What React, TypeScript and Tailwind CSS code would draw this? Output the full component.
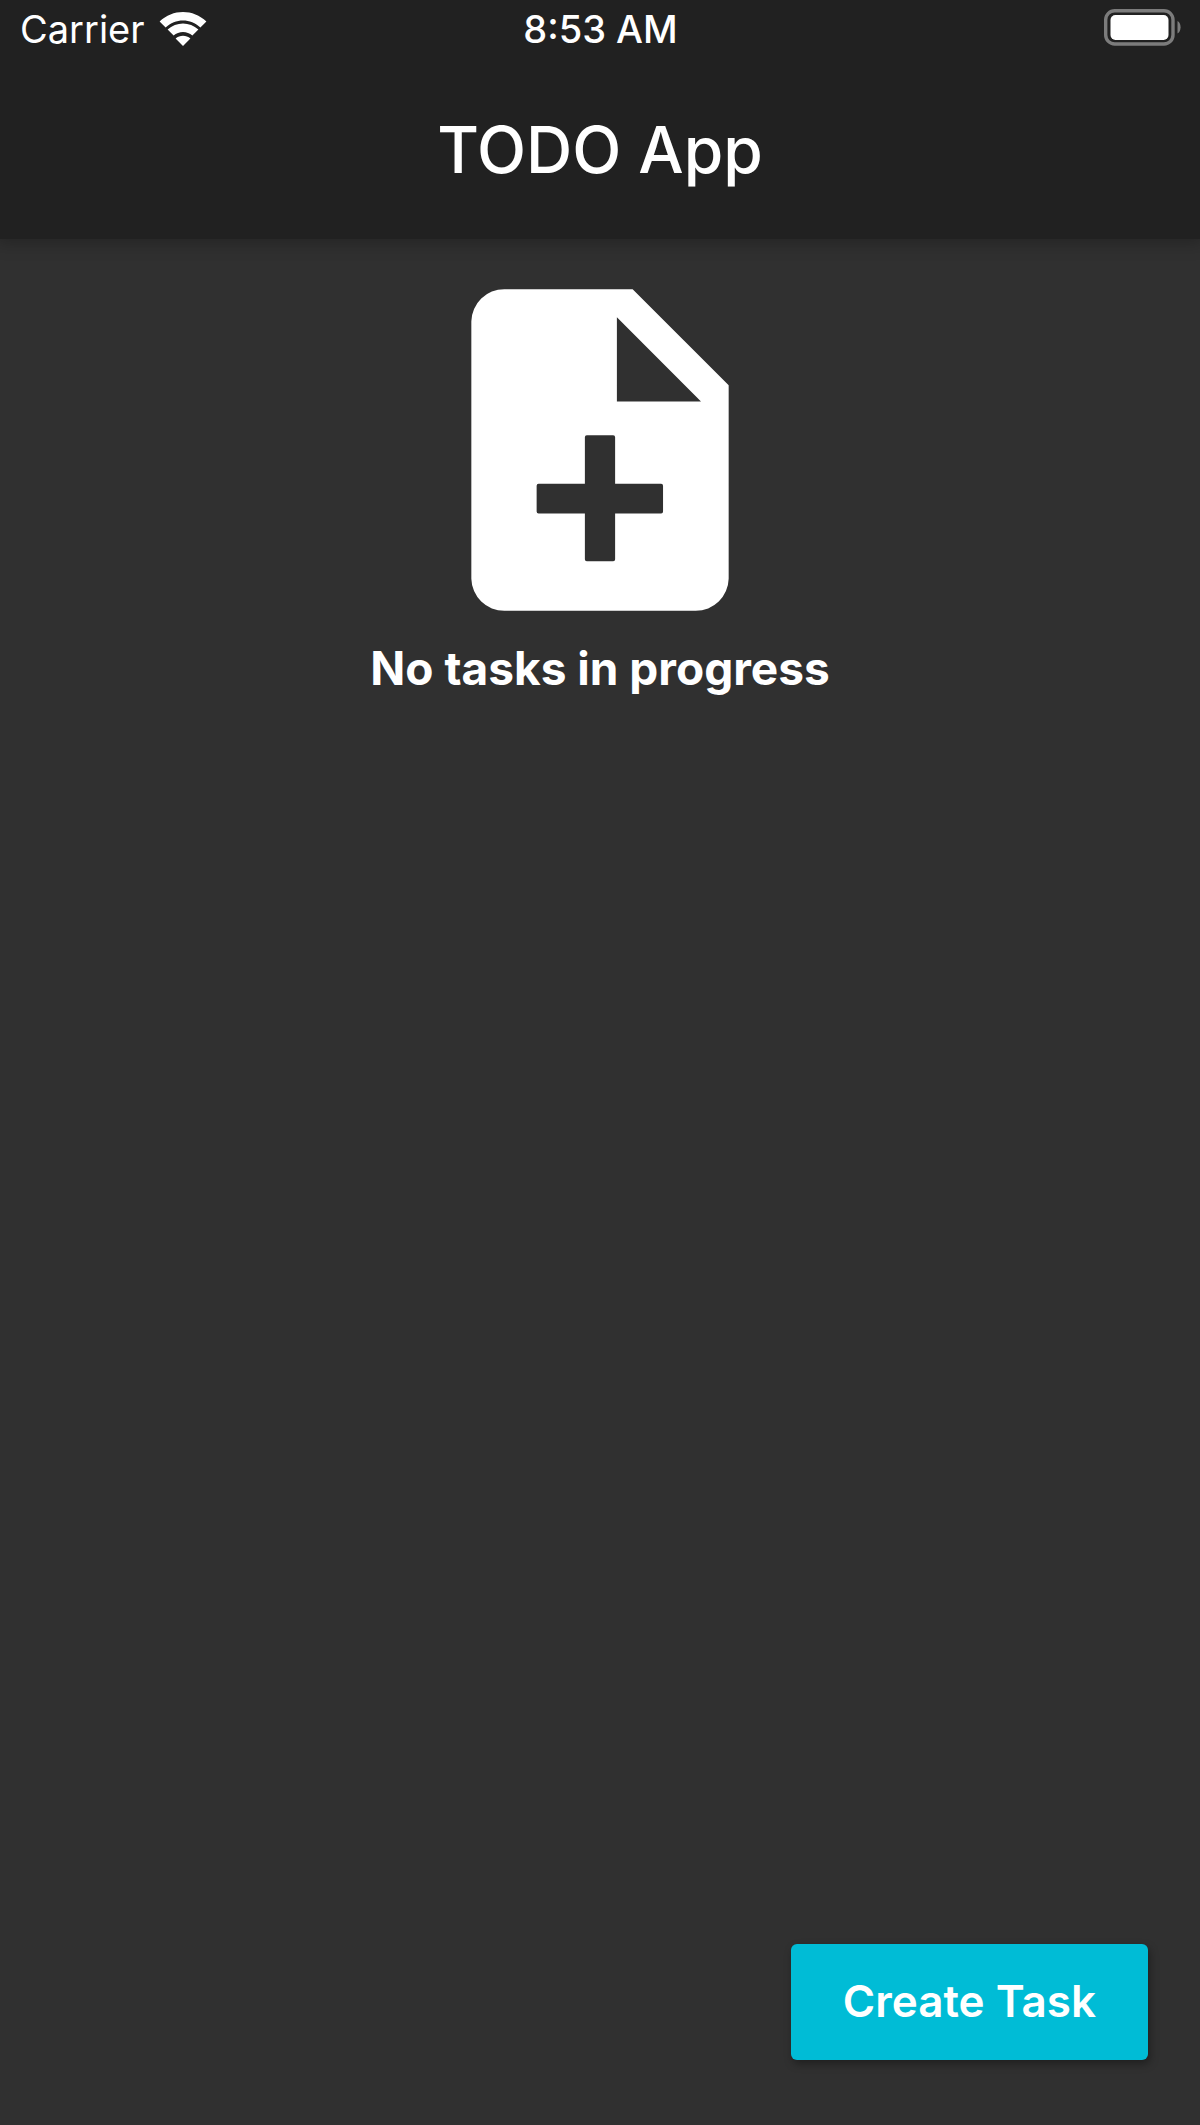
function WifiIcon() {
  return (
    <svg viewBox="0 0 48 36" className="h-9 w-12" fill="#fff" aria-hidden="true">
      <path d="M0.6 10.6C13.6 -2.2 34.4 -2.2 47.4 10.6L41.4 16.6C31.8 7.2 16.2 7.2 6.6 16.6Z" />
      <path d="M8.6 18.6C17.3 10.3 30.7 10.3 39.4 18.6L33.4 24.6C28.2 19.7 19.8 19.7 14.6 24.6Z" />
      <path d="M16.6 27.4C20.8 23.9 27.2 23.9 31.4 27.4L24 35Z" />
    </svg>
  );
}

function BatteryIcon() {
  return (
    <svg viewBox="0 0 78 38" className="h-[38px] w-[78px]" aria-label="Battery full" role="img">
      <rect x="2.7" y="2.7" width="67.3" height="33.3" rx="9" fill="none" stroke="#7c7c7c" strokeWidth="3.4" />
      <rect x="7.5" y="7" width="58" height="25" rx="5" fill="#fff" />
      <path d="M74.5 13C78.6 15 78.6 23.6 74.5 25.6Z" fill="#7c7c7c" />
    </svg>
  );
}

function NoteAddIcon() {
  return (
    <svg viewBox="0 0 24 24" className="size-[386px]" fill="#fff" aria-hidden="true">
      <path
        fillRule="evenodd"
        d="M6.05 2H14.03L20 7.98V20A2.05 2.05 0 0 1 17.95 22H6.05A2.05 2.05 0 0 1 4 20V4A2.05 2.05 0 0 1 6.05 2ZM13.05 3.75V8.98H18.28ZM11.18 11.08A.12 .12 0 0 0 11.06 11.2V14.1H8.18A.12 .12 0 0 0 8.06 14.22V15.83A.12 .12 0 0 0 8.18 15.95H11.06V18.8A.12 .12 0 0 0 11.18 18.92H12.82A.12 .12 0 0 0 12.94 18.8V15.95H15.8A.12 .12 0 0 0 15.92 15.83V14.22A.12 .12 0 0 0 15.8 14.1H12.94V11.2A.12 .12 0 0 0 12.82 11.08Z"
      />
    </svg>
  );
}

export default function App() {
  return (
    <div className="flex min-h-screen flex-col overflow-x-hidden bg-[#303030] font-['Inter',sans-serif] text-white">
      <header className="bg-[#212121] shadow-[0_0_16px_4px_rgba(0,0,0,0.25)]">
        <div className="grid h-[58px] grid-cols-3 items-center pr-[19px] pl-5 text-[38px] leading-[58px]">
          <div className="flex items-center gap-3.5">
            <span>Carrier</span>
            <WifiIcon />
          </div>
          <time className="text-center font-medium">8:53 AM</time>
          <div className="flex h-full items-start justify-end pt-2">
            <BatteryIcon />
          </div>
        </div>
        <h1 className="pt-[52px] pb-[49px] text-center text-[64px] leading-[80px] font-medium">TODO App</h1>
      </header>
      <main className="flex flex-1 flex-col items-center pt-[18px]">
        <NoteAddIcon />
        <p className="text-[46px] leading-[50px] font-bold">No tasks in progress</p>
      </main>
      <footer className="flex justify-end pr-[52px] pb-[65px]">
        <button
          type="button"
          className="rounded-md bg-[#00bcd6] px-[52px] pt-[31px] pb-[33px] text-[44px] leading-[52px] font-semibold shadow-[2px_4px_8px_rgba(0,0,0,0.35)]"
        >
          Create Task
        </button>
      </footer>
    </div>
  );
}
